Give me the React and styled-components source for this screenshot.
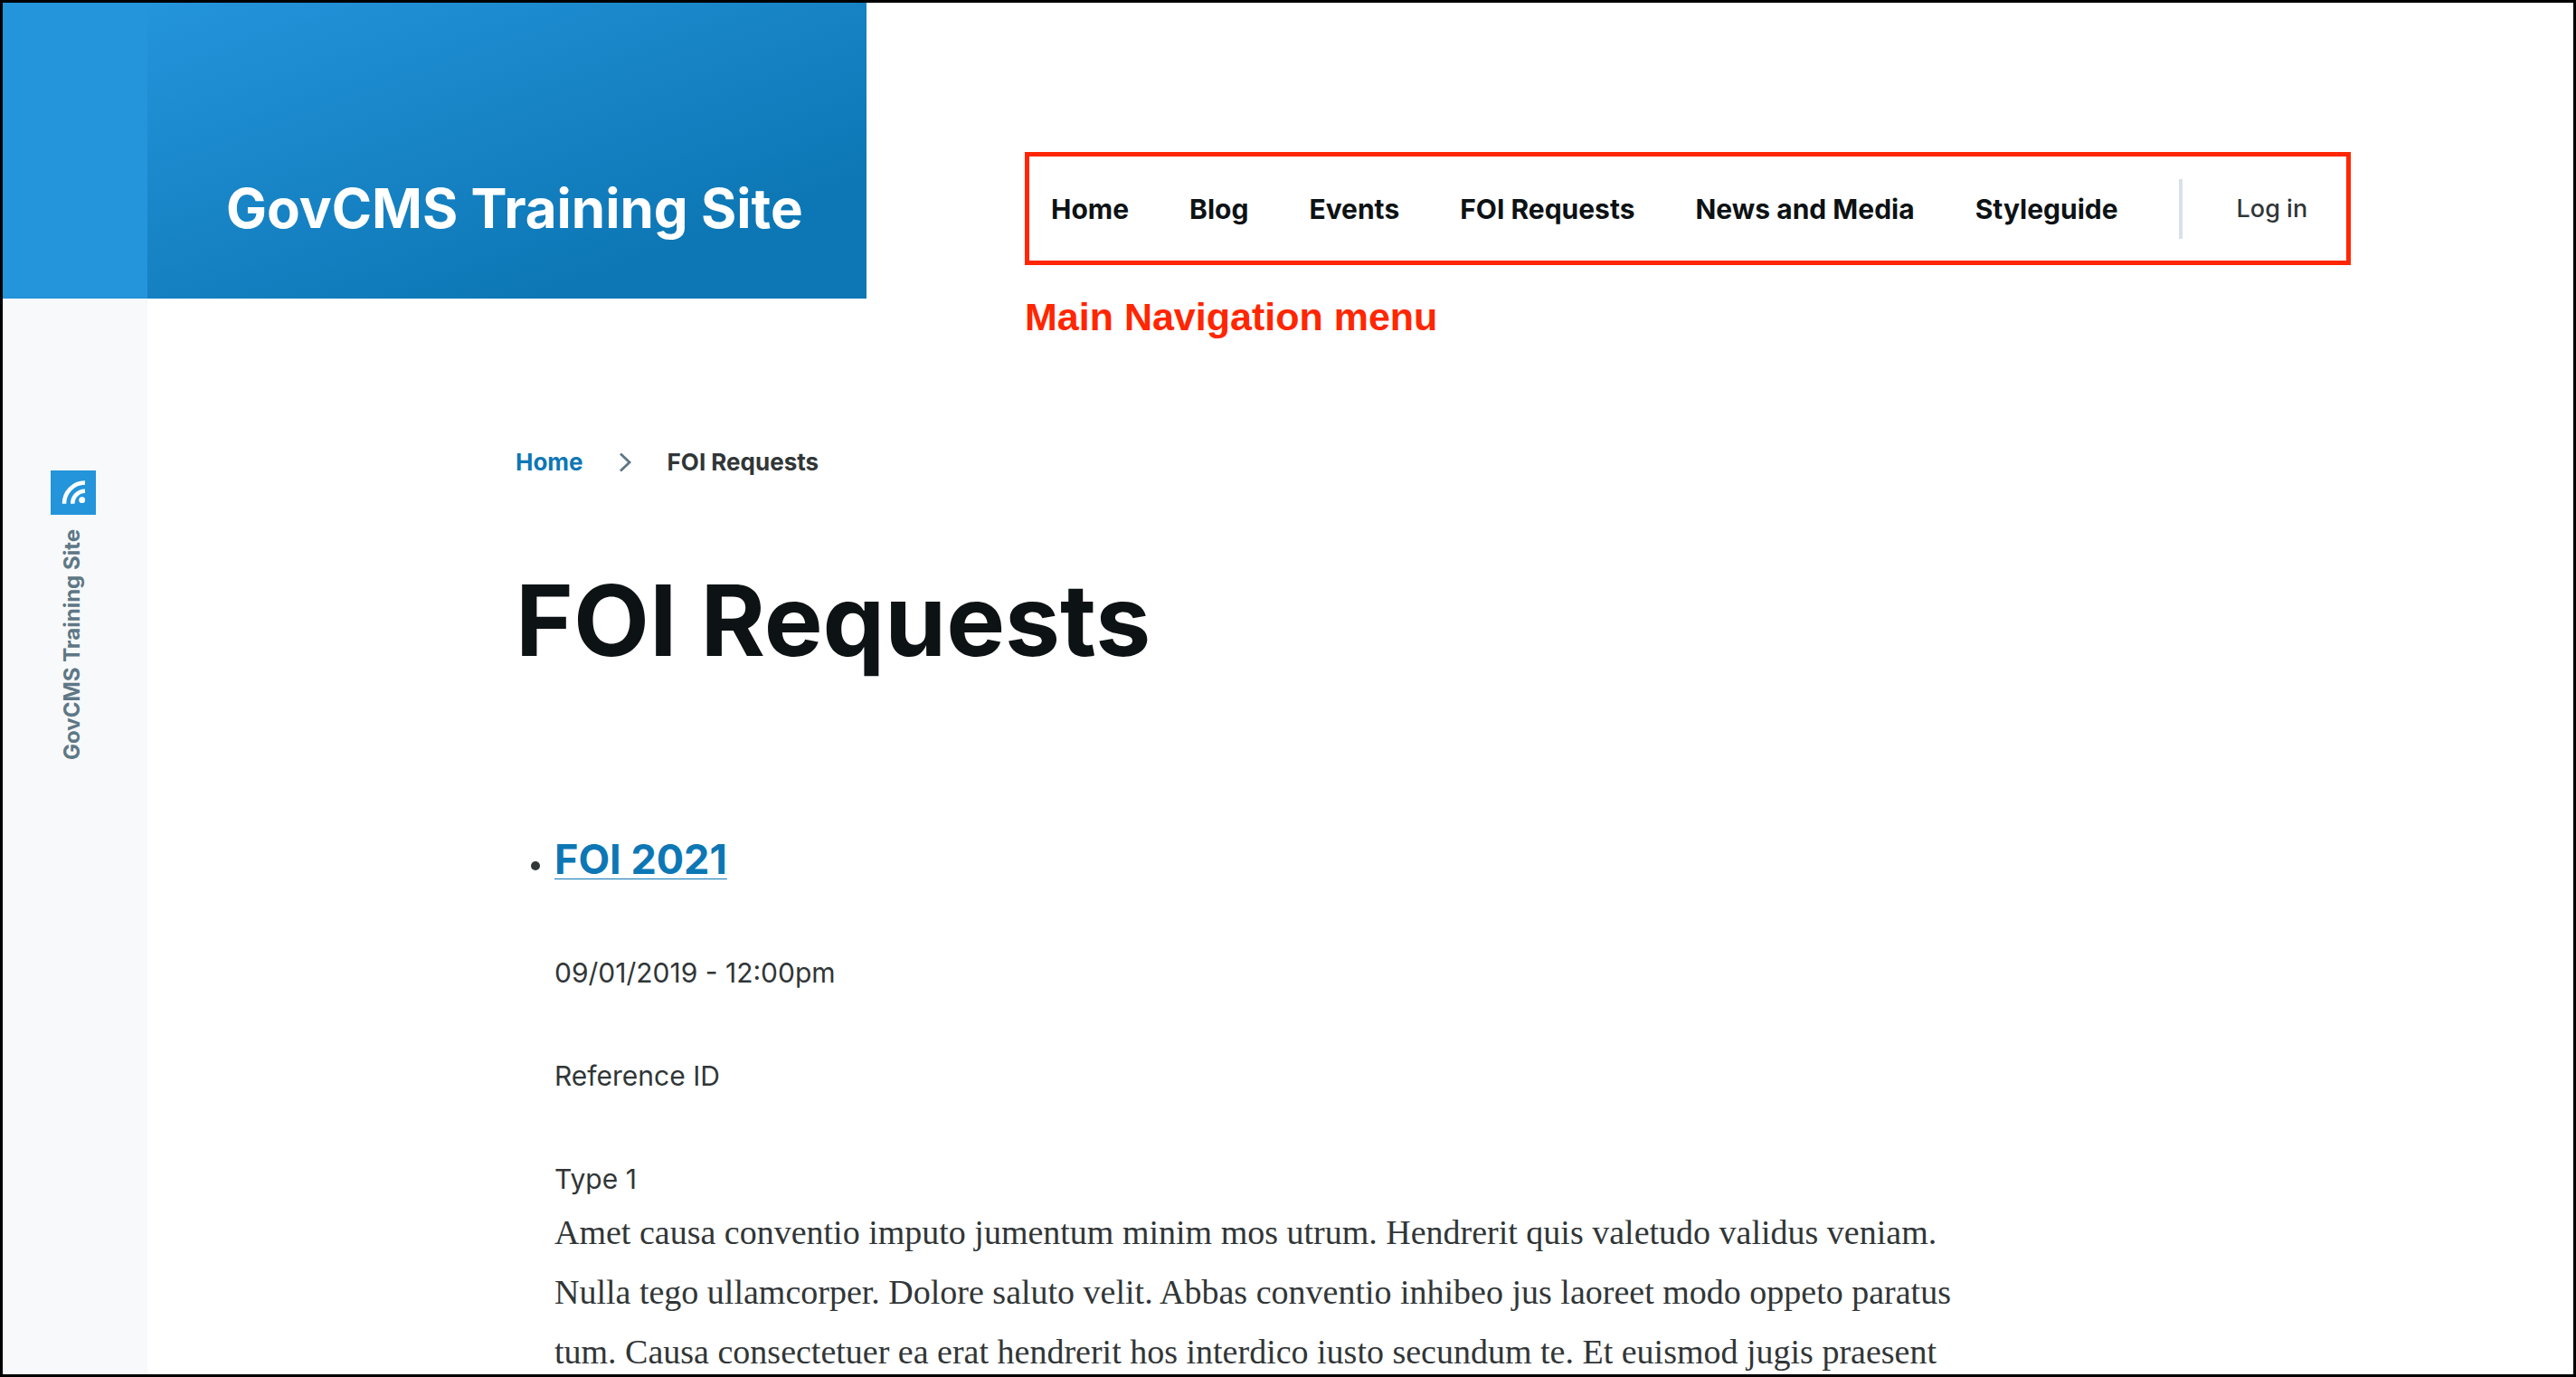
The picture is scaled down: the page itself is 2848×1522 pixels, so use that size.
import React from "react";
import styled, { createGlobalStyle } from "styled-components";

const GlobalStyle = createGlobalStyle`
  *, *::before, *::after { box-sizing: border-box; }
  body {
    margin: 0;
    background: #fff;
    color: #313637;
    font-family: Inter, "Open Sans", sans-serif;
  }
  h1, h2, p, ul, ol { margin: 0; padding: 0; font-size: inherit; }
  a { color: inherit; text-decoration: none; }
`;

const Frame = styled.div`
  display: flex;
  height: 100vh;
  overflow: hidden;
  border: 3px solid #000;
`;

const Sidebar = styled.aside`
  flex: 0 0 160px;
  display: flex;
  flex-direction: column;
  background: #f7f9fa;
`;

const SidebarTop = styled.div`
  height: 327px;
  background: #2494db;
`;

const SidebarBody = styled.div`
  display: flex;
  flex-direction: column;
  align-items: center;
  gap: 16px;
  padding: 190px 4px 0 0;
`;

const FeedLink = styled.a`
  display: block;
  width: 50px;
  height: 49px;
  background: #2494db;
  svg { display: block; }
`;

const SidebarLabel = styled.span`
  writing-mode: vertical-rl;
  transform: rotate(180deg);
  padding-left: 2px;
  color: #5e7785;
  font-size: 24px;
  line-height: 30px;
  font-weight: 700;
`;

const Page = styled.div`
  flex: 1;
  min-width: 0;
`;

const Header = styled.header`
  display: flex;
  align-items: flex-start;
  gap: 175px;
`;

const Brand = styled.div`
  flex: 0 0 795px;
  display: flex;
  align-items: center;
  height: 327px;
  padding: 127px 0 0 87px;
  background: linear-gradient(160deg, #2494db 0%, #0d77b5 78.66%);
`;

const SiteName = styled.a`
  color: #fff;
  font-size: 60px;
  line-height: 72px;
  font-weight: 700;
  white-space: nowrap;
`;

const NavArea = styled.div`
  padding-top: 165px;
`;

const Nav = styled.nav`
  display: flex;
  align-items: center;
  gap: 67px;
  height: 125px;
  padding: 0 43px 0 24px;
  border: 5px solid #ff2600;
  white-space: nowrap;
`;

const Menu = styled.ul`
  display: flex;
  gap: 67px;
  list-style: none;
`;

const MenuLink = styled.a`
  color: #0d1214;
  font-size: 30px;
  line-height: 36px;
  font-weight: 700;
`;

const Account = styled.div`
  display: flex;
  align-items: center;
  height: 66px;
  padding-left: 60px;
  border-left: 4px solid #d7e1e8;
`;

const LoginLink = styled.a`
  font-size: 27px;
  line-height: 36px;
  font-weight: 500;
`;

const Caption = styled.p`
  margin-top: 32px;
  color: #ff2600;
  font-family: "Liberation Sans", Arial, sans-serif;
  font-size: 43px;
  line-height: 50px;
  font-weight: 700;
`;

const Main = styled.main`
  padding: 121px 40px 0 407px;
`;

const Breadcrumb = styled.ol`
  display: flex;
  align-items: center;
  gap: 39px;
  list-style: none;
  font-size: 26px;
  line-height: 30px;
  font-weight: 700;
`;

const Crumb = styled.li`
  display: flex;
  align-items: center;
  gap: 39px;
`;

const CrumbLink = styled.a`
  color: #0d77b5;
`;

const Title = styled.h1`
  margin-top: 99px;
  color: #0d1214;
  font-size: 109px;
  line-height: 120px;
  font-weight: 700;
`;

const Results = styled.ul`
  max-width: 1643px;
  margin-top: 178px;
  padding-left: 43px;
  font-size: 30px;
`;

const Heading = styled.h2`
  margin-bottom: 72px;
  font-size: 45px;
  line-height: 54px;
  font-weight: 700;
`;

const HeadingLink = styled.a`
  color: #0d77b5;
  text-decoration: underline;
  text-decoration-thickness: 1px;
  text-underline-offset: 5px;
  text-decoration-skip-ink: none;
`;

const Fields = styled.div`
  display: grid;
  gap: 62px;
  font-size: 30px;
  line-height: 52px;
`;

const Body = styled.p`
  font-family: "Liberation Serif", "Times New Roman", serif;
  font-size: 38px;
  line-height: 66px;
`;

const menu = ["Home", "Blog", "Events", "FOI Requests", "News and Media", "Styleguide"];
const fields = ["09/01/2019 - 12:00pm", "Reference ID", "Type 1"];

function FeedIcon() {
  return (
    <svg width="50" height="49" viewBox="0 0 50 49" fill="none" stroke="#fff" strokeWidth="4.6" aria-hidden="true">
      <path d="M15 36.7A23 23 0 0 1 38 13.5" />
      <path d="M24.3 36.7A13.7 13.7 0 0 1 38 22.7" />
      <circle cx="34.7" cy="32.7" r="3.4" fill="#fff" stroke="none" />
    </svg>
  );
}

function Chevron() {
  return (
    <svg width="15" height="22" viewBox="0 0 15 22" fill="none" stroke="#5e7785" strokeWidth="2.8" aria-hidden="true">
      <path d="M2 1.500L12 11L2 20.500" />
    </svg>
  );
}

export default function App() {
  return (
    <>
      <GlobalStyle />
      <Frame>
        <Sidebar>
          <SidebarTop />
          <SidebarBody>
            <FeedLink href="#feed" aria-label="RSS feed">
              <FeedIcon />
            </FeedLink>
            <SidebarLabel>GovCMS Training Site</SidebarLabel>
          </SidebarBody>
        </Sidebar>
        <Page>
          <Header>
            <Brand>
              <SiteName href="#home">GovCMS Training Site</SiteName>
            </Brand>
            <NavArea>
              <Nav>
                <Menu>
                  {menu.map((item) => (
                    <li key={item}>
                      <MenuLink href="#menu">{item}</MenuLink>
                    </li>
                  ))}
                </Menu>
                <Account>
                  <LoginLink href="#login">Log in</LoginLink>
                </Account>
              </Nav>
              <Caption>Main Navigation menu</Caption>
            </NavArea>
          </Header>
          <Main>
            <Breadcrumb>
              <Crumb>
                <CrumbLink href="#home">Home</CrumbLink>
                <Chevron />
              </Crumb>
              <Crumb>FOI Requests</Crumb>
            </Breadcrumb>
            <Title>FOI Requests</Title>
            <Results>
              <li>
                <Heading>
                  <HeadingLink href="#foi-2021">FOI 2021</HeadingLink>
                </Heading>
                <Fields>
                  {fields.map((field) => (
                    <div key={field}>{field}</div>
                  ))}
                </Fields>
                <Body>
                  Amet causa conventio imputo jumentum minim mos utrum. Hendrerit quis valetudo validus veniam.
                  Nulla tego ullamcorper. Dolore saluto velit. Abbas conventio inhibeo jus laoreet modo oppeto
                  paratus tum. Causa consectetuer ea erat hendrerit hos interdico iusto secundum te. Et euismod
                  jugis praesent
                </Body>
              </li>
            </Results>
          </Main>
        </Page>
      </Frame>
    </>
  );
}
